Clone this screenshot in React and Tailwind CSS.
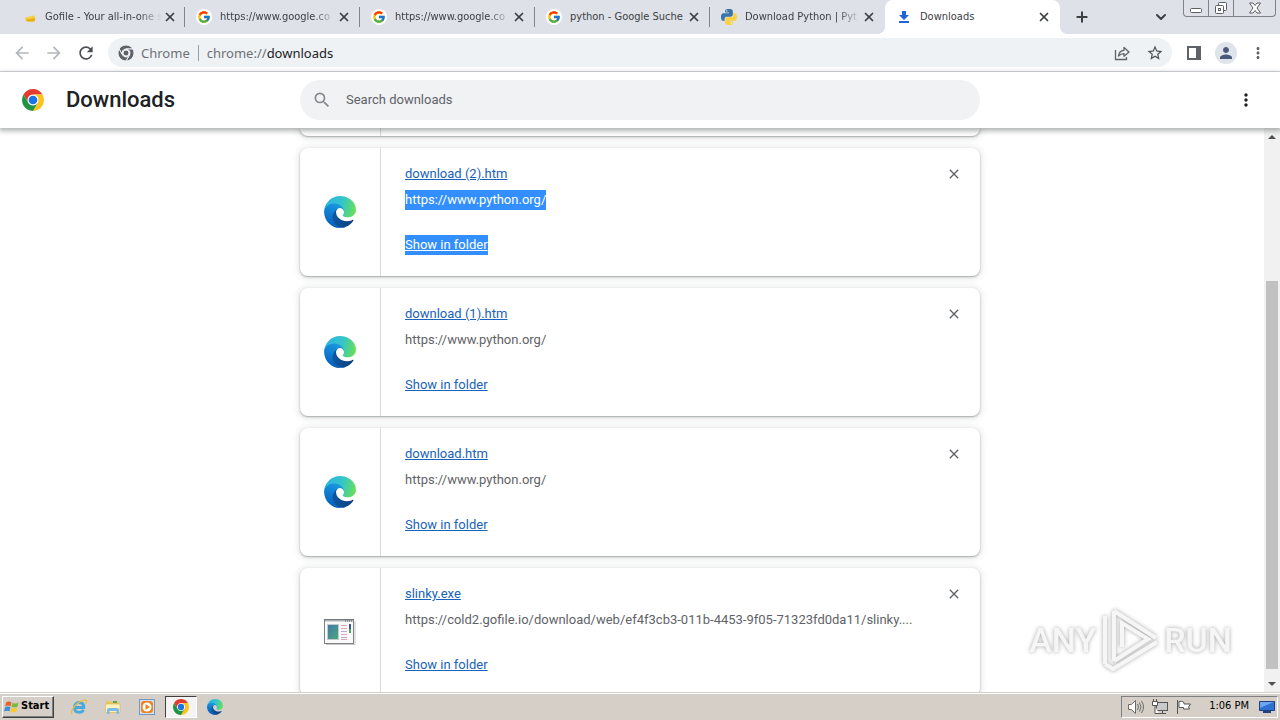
import clsx from 'clsx';
import { Plus, X, ChevronDown } from 'lucide-react';
import { FcGoogle } from 'react-icons/fc';
import {
  MdArrowBack,
  MdArrowForward,
  MdClose,
  MdMoreVert,
  MdPerson,
  MdRefresh,
  MdSearch,
  MdStarBorder,
} from 'react-icons/md';

const TABS = [
  { id: 'gofile', title: 'Gofile - Your all-in-one s', icon: GofileIcon, fade: true },
  { id: 'g1', title: 'https://www.google.co', icon: GoogleIcon, fade: true },
  { id: 'g2', title: 'https://www.google.co', icon: GoogleIcon, fade: true },
  { id: 'g3', title: 'python - Google Suche', icon: GoogleIcon },
  { id: 'py', title: 'Download Python | Pyt', icon: PythonIcon, fade: true },
  { id: 'dl', title: 'Downloads', icon: DownloadIcon, active: true },
];

const DOWNLOADS = [
  { name: 'download (2).htm', url: 'https://www.python.org/', icon: EdgeIcon, selected: true },
  { name: 'download (1).htm', url: 'https://www.python.org/', icon: EdgeIcon },
  { name: 'download.htm', url: 'https://www.python.org/', icon: EdgeIcon },
  {
    name: 'slinky.exe',
    url: 'https://cold2.gofile.io/download/web/ef4f3cb3-011b-4453-9f05-71323fd0da11/slinky....',
    icon: ExeIcon,
  },
];

/* ---------- icons ---------- */

function ChromeIcon({ className }) {
  return (
    <svg viewBox="0 0 48 48" className={className}>
      <circle cx="24" cy="24" r="12" fill="#fff" />
      <path fill="#e33b2e" d="M24 12h20.78A24 24 0 0 0 3.22 12l10.39 18A12 12 0 0 1 24 12z" />
      <path fill="#fcc31e" d="M34.39 30 24 48a24 24 0 0 0 20.78-36H24a12 12 0 0 1 10.39 18z" />
      <path fill="#229342" d="M13.61 30 3.22 12A24 24 0 0 0 24 48l10.39-18a12 12 0 0 1-20.78 0z" />
      <circle cx="24" cy="24" r="9.5" fill="#1a73e8" />
    </svg>
  );
}

function ChromeMonoIcon({ className }) {
  return (
    <svg viewBox="0 0 48 48" className={className} fill="#5f6368" stroke="#eff2f5" strokeWidth="3">
      <path d="M24 12h20.78A24 24 0 0 0 3.22 12l10.39 18A12 12 0 0 1 24 12z" />
      <path d="M34.39 30 24 48a24 24 0 0 0 20.78-36H24a12 12 0 0 1 10.39 18z" />
      <path d="M13.61 30 3.22 12A24 24 0 0 0 24 48l10.39-18a12 12 0 0 1-20.78 0z" />
      <circle cx="24" cy="24" r="9" />
    </svg>
  );
}

function EdgeIcon({ className }) {
  return (
    <svg viewBox="4 4 257 257" className={className}>
      <defs>
        <linearGradient id="edgeDark" x1="63" y1="178" x2="241" y2="178" gradientUnits="userSpaceOnUse">
          <stop offset="0" stopColor="#0c59a4" />
          <stop offset="1" stopColor="#0d3f80" />
        </linearGradient>
        <linearGradient id="edgeBlue" x1="130" y1="60" x2="60" y2="240" gradientUnits="userSpaceOnUse">
          <stop offset="0" stopColor="#1b9de2" />
          <stop offset="0.5" stopColor="#1180d2" />
          <stop offset="1" stopColor="#0562bd" />
        </linearGradient>
        <linearGradient id="edgeGreen" x1="30" y1="70" x2="250" y2="130" gradientUnits="userSpaceOnUse">
          <stop offset="0" stopColor="#2fb4e0" />
          <stop offset="0.5" stopColor="#35c5c9" />
          <stop offset="1" stopColor="#66df58" />
        </linearGradient>
      </defs>
      <path
        fill="url(#edgeDark)"
        d="M235.68 195.46a93.73 93.73 0 0 1-10.54 4.71 101.87 101.87 0 0 1-35.9 6.46c-47.32 0-88.54-32.55-88.54-74.32A31.48 31.48 0 0 1 117.13 105c-42.8 1.8-53.8 46.4-53.8 72.53 0 73.88 68.09 81.37 82.76 81.37 7.91 0 19.84-2.3 27-4.56l1.31-.44a128.34 128.34 0 0 0 66.6-52.8 4 4 0 0 0-5.32-5.64z"
      />
      <path
        fill="url(#edgeBlue)"
        d="M110.34 246.34A79.2 79.2 0 0 1 87.6 225a80.72 80.72 0 0 1 29.53-120c3.12-1.47 8.45-4.13 15.54-4a32.35 32.35 0 0 1 25.69 13 31.88 31.88 0 0 1 6.36 18.66c0-.21 24.46-79.6-80-79.6-43.9 0-80 41.66-80 78.21a130.15 130.15 0 0 0 12.11 56 128 128 0 0 0 156.38 67.11 75.55 75.55 0 0 1-62.78-8z"
      />
      <path
        fill="url(#edgeGreen)"
        d="M156.94 153.78c-.81 1.05-3.3 2.5-3.3 5.66 0 2.61 1.7 5.12 4.72 7.23 14.38 10 41.49 8.68 41.56 8.68a59.56 59.56 0 0 0 30.27-8.35 61.38 61.38 0 0 0 30.43-52.88c.26-22.41-8-37.31-11.34-43.91C228.09 28.76 182.35 4.92 132.61 4.92a128 128 0 0 0-128 126.2c.48-36.54 36.8-66.05 80-66.05 3.5 0 23.46.34 42 10.07 16.34 8.58 24.9 18.94 30.85 29.21 6.18 10.67 7.28 24.15 7.28 29.52s-2.74 13.33-7.8 19.91z"
      />
    </svg>
  );
}

function ExeIcon({ className }) {
  return (
    <svg viewBox="0 0 32 32" className={className}>
      <defs>
        <linearGradient id="exeFill" x1="0" y1="0" x2="1" y2="1">
          <stop offset="0" stopColor="#3f78ae" />
          <stop offset="1" stopColor="#4fa978" />
        </linearGradient>
      </defs>
      <path d="M2 28.500h29V5" fill="none" stroke="#c8c8c8" />
      <rect x="0.500" y="3.500" width="29" height="24" fill="#fafafa" stroke="#7d8186" />
      <path d="M0 4h30" stroke="#6b6f74" />
      <path d="M1 5.500h28" stroke="#d5d8da" />
      <path d="M21 5h7" stroke="#55595e" strokeDasharray="1 1" />
      <rect x="3.500" y="8.500" width="11" height="15" fill="url(#exeFill)" stroke="#c3cbd0" />
      <path d="M17 9.500h6M17 12.500h6M17 18.500h6M17 23.500h6" stroke="#e2a5b4" />
      <path d="M17 15.500h6M17 21.500h6" stroke="#b9a9d0" />
      <rect x="25" y="8" width="2" height="5" fill="#37598f" />
      <rect x="25" y="13" width="2" height="4" fill="#4fa560" />
    </svg>
  );
}

function GofileIcon({ className }) {
  return (
    <svg viewBox="0 0 16 16" className={className}>
      <path fill="#f4cf4c" d="M4 8.500 13 6.500a1 1 0 0 1 1 1V11a1.500 1.500 0 0 1-1.500 1.500H7A2.500 2.500 0 0 1 4.500 11z" />
      <path fill="#e9b012" d="M5 10.500 14 9v2a1.500 1.500 0 0 1-1.500 1.500H7a2 2 0 0 1-2-2z" />
    </svg>
  );
}

function GoogleIcon({ className }) {
  return (
    <span className={clsx(className, 'flex items-center justify-center rounded-full bg-white')}>
      <FcGoogle size={14} />
    </span>
  );
}

function PythonIcon({ className }) {
  return (
    <svg viewBox="0 0 24 24" className={className}>
      <path
        fill="#3a74a8"
        d="M11.900 0C5.800 0 6.200 2.600 6.200 2.600v2.800H12v.8H3.900S0 5.800 0 11.900c0 6.100 3.400 5.900 3.400 5.900h2v-2.900s-.1-3.400 3.300-3.400h5.800s3.200.1 3.200-3.100V3.200S18.200 0 11.900 0z"
      />
      <path
        fill="#fcd03f"
        d="M12.100 24c6.100 0 5.700-2.600 5.700-2.600v-2.800H12v-.8h8.100S24 18.200 24 12.100c0-6.100-3.400-5.900-3.400-5.900h-2v2.900s.1 3.400-3.300 3.400H9.500s-3.200-.1-3.200 3.100v5.200S5.800 24 12.100 24z"
      />
      <circle cx="8.700" cy="2.900" r="1" fill="#fff" />
      <circle cx="15.300" cy="21.100" r="1" fill="#fff" />
    </svg>
  );
}

function DownloadIcon({ className }) {
  return (
    <svg viewBox="0 0 16 16" className={className} fill="#1f66d8">
      <path d="M6 2h4v4h3L8 11 3 6h3z" />
      <path d="M3 12h10v2H3z" />
    </svg>
  );
}

function ShareIcon({ className }) {
  return (
    <svg viewBox="0 0 16 16" className={className} fill="none" stroke="#5f6368" strokeWidth="1.300">
      <path d="M1.500 5v9.500h11V12" />
      <path strokeLinejoin="round" d="M4.500 11C4.800 7.500 7 5.500 10 5.300V2.500L15 7l-5 4.300V8.600C7.500 8.600 6 9.200 4.500 11z" />
    </svg>
  );
}

/* ---------- browser chrome ---------- */

function Tab({ title, icon: Icon, active, fade, last }) {
  return (
    <div
      className={clsx(
        'relative flex h-full w-[175px] shrink-0 items-center pr-2 pl-[11px]',
        active && 'rounded-t-lg bg-white'
      )}
    >
      {active && (
        <>
          <span className="absolute bottom-0 -left-2 size-2 bg-[radial-gradient(circle_at_0_0,#dee1e8_8px,#fff_8px)]" />
          <span className="absolute -right-2 bottom-0 size-2 bg-[radial-gradient(circle_at_100%_0,#dee1e8_8px,#fff_8px)]" />
        </>
      )}
      <Icon className="size-4 shrink-0" />
      <span
        className={clsx(
          'ml-2 flex-1 text-[11px] leading-4 whitespace-nowrap text-[#3c4043]',
          fade && '[mask-image:linear-gradient(to_right,#000_80%,transparent)]'
        )}
      >
        {title}
      </span>
      <button aria-label={`Close ${title}`} className="flex size-4 shrink-0 items-center justify-center text-[#3c4043]">
        <X size={14} strokeWidth={3} />
      </button>
      {!active && !last && <span className="absolute right-0 h-5 w-px bg-[#80848b]" />}
    </div>
  );
}

function TabStrip() {
  return (
    <div className="flex h-[34px] shrink-0 bg-[#dee1e8] pl-[10px] font-[DejaVu_Sans_Condensed,sans-serif]">
      {TABS.map(({ id, ...tab }, i) => (
        <Tab key={id} {...tab} last={i === TABS.length - 2} />
      ))}
      <button aria-label="New tab" className="ml-3 flex w-5 items-center justify-center text-[#3c4043]">
        <Plus size={16} strokeWidth={3} />
      </button>
      <div className="flex-1" />
      <button aria-label="Search tabs" className="mr-3 flex w-5 items-center justify-center text-[#3c4043]">
        <ChevronDown size={16} strokeWidth={3} />
      </button>
      <div className="mr-1 flex h-[17px] w-[93px] rounded-b-[4px] border border-t-0 border-[#7f838a] text-[#5b5f66]">
        <button aria-label="Minimize" className="flex w-[25px] items-center justify-center border-r border-[#7f838a]">
          <svg viewBox="0 0 12 12" className="size-3" fill="#fff" stroke="currentColor">
            <rect x="0.500" y="6.500" width="11" height="4" rx="1" />
          </svg>
        </button>
        <button aria-label="Restore" className="flex w-[25px] items-center justify-center border-r border-[#7f838a]">
          <svg viewBox="0 0 14 14" className="size-[14px]" fill="#fff" stroke="currentColor">
            <rect x="4.500" y="1.500" width="8" height="8" rx="1" />
            <rect x="1.500" y="4.500" width="8" height="8" rx="1" />
            <rect x="4.500" y="7.500" width="2" height="2" />
          </svg>
        </button>
        <button aria-label="Close window" className="flex flex-1 items-center justify-center">
          <svg viewBox="0 0 12 12" className="size-3" fill="#fff" stroke="currentColor">
            <path d="M.500 1h3.500l2 2.500L8 1h3.500L8 6l3.500 5H8L6 8.500 4 11H.500L4 6z" />
          </svg>
        </button>
      </div>
    </div>
  );
}

function Toolbar() {
  return (
    <div className="flex h-[38px] shrink-0 items-center border-b border-[#d5d8dc] bg-white pr-[13px] pl-3 font-[Noto_Sans,sans-serif]">
      <button aria-label="Back" className="flex w-5 justify-center text-[#b4b7bb]">
        <MdArrowBack size={20} />
      </button>
      <button aria-label="Forward" className="ml-3 flex w-5 justify-center text-[#b4b7bb]">
        <MdArrowForward size={20} />
      </button>
      <button aria-label="Reload" className="ml-3 flex w-5 justify-center text-[#4b4f54]">
        <MdRefresh size={20} />
      </button>
      <div className="ml-3 flex h-[29px] flex-1 items-center rounded-full bg-[#eff2f5] pr-2 pl-[10px] text-[13px] leading-5 text-[#6d7176]">
        <ChromeMonoIcon className="size-4" />
        <span className="ml-[7px]">Chrome</span>
        <span className="mx-2 h-4 w-px bg-[#9a9da1]" />
        <span>chrome://</span>
        <input
          aria-label="Address"
          defaultValue="downloads"
          className="min-w-0 flex-1 bg-transparent text-[#202124] outline-none"
        />
        <button aria-label="Share this page" className="mr-4">
          <ShareIcon className="size-4" />
        </button>
        <button aria-label="Bookmark this tab" className="text-[#4b4f54]">
          <MdStarBorder size={18} />
        </button>
      </div>
      <button aria-label="Side panel" className="ml-[14px]">
        <svg viewBox="0 0 16 16" className="size-4">
          <path fill="#5f6368" d="M1 1h14v14H1zM3 3v10h7V3z" fillRule="evenodd" />
        </svg>
      </button>
      <button
        aria-label="Profile"
        className="ml-[13px] flex size-[22px] items-center justify-center rounded-full bg-[#dfe3ea] text-[#4b5a7b]"
      >
        <MdPerson size={18} />
      </button>
      <button aria-label="Menu" className="ml-3 text-[#5f6368]">
        <MdMoreVert size={18} />
      </button>
    </div>
  );
}

/* ---------- downloads page ---------- */

function PageHeader() {
  return (
    <header className="relative z-10 grid h-14 shrink-0 grid-cols-[1fr_680px_1fr] items-center bg-white shadow-[0_2px_5px_1px_rgba(60,64,67,0.4)]">
      <div className="flex items-center pl-[22px]">
        <ChromeIcon className="size-[22px]" />
        <h1 className="ml-[22px] text-[22px] leading-7 font-medium text-[#202124]">Downloads</h1>
      </div>
      <label className="flex h-10 items-center rounded-full bg-[#f0f2f4] pl-3 text-[#5f6368]">
        <MdSearch size={20} className="text-[#85888c]" />
        <input
          type="search"
          aria-label="Search downloads"
          placeholder="Search downloads"
          className="ml-[14px] flex-1 bg-transparent text-[13px] leading-5 outline-none placeholder:text-[#5f6368]"
        />
      </label>
      <div className="flex justify-end pr-6">
        <button aria-label="More actions" className="text-[#202124]">
          <MdMoreVert size={20} />
        </button>
      </div>
    </header>
  );
}

function DownloadCard({ name, url, icon: Icon, selected }) {
  return (
    <li className="flex h-32 shrink-0 rounded-lg bg-white shadow-[0_1px_2px_rgba(60,64,67,0.4),0_1px_6px_2px_rgba(60,64,67,0.12)]">
      <div className="flex w-20 items-center justify-center">
        <Icon className="size-8" />
      </div>
      <div className="flex flex-1 flex-col items-start border-l border-[#d8dadd] pt-4 pl-6 text-[13px] leading-5">
        <a href="#file" className="text-[#1a63b8] underline">
          {name}
        </a>
        <span className={clsx('mt-[6px] whitespace-nowrap', selected ? 'bg-[#338fff] text-white' : 'text-[#5f6368]')}>
          {url}
        </span>
        <a
          href="#folder"
          className={clsx('mt-[25px] underline', selected ? 'bg-[#338fff] text-white' : 'text-[#1a63b8]')}
        >
          Show in folder
        </a>
      </div>
      <button aria-label={`Remove ${name}`} className="mt-[18px] mr-[18px] size-4 text-[#5f6368]">
        <MdClose size={16} />
      </button>
    </li>
  );
}

function Scrollbar() {
  return (
    <div className="flex w-4 flex-col items-center bg-[#f1f1f1]">
      <button aria-label="Scroll up" className="flex h-[17px] w-4 items-center justify-center">
        <svg viewBox="0 0 8 4" className="h-1 w-2">
          <path fill="#505050" d="M0 4 4 0l4 4z" />
        </svg>
      </button>
      <div className="flex w-full flex-1 flex-col justify-end px-[2px] pb-[6px]">
        <div className="h-[74%] bg-[#c1c1c1]" />
      </div>
      <button aria-label="Scroll down" className="flex h-[17px] w-4 items-center justify-center">
        <svg viewBox="0 0 8 4" className="h-1 w-2">
          <path fill="#505050" d="M0 0l4 4 4-4z" />
        </svg>
      </button>
    </div>
  );
}

function Watermark() {
  return (
    <div className="absolute right-12 bottom-4 flex items-center gap-1 font-[Roboto,sans-serif] text-[34px] leading-[72px] font-medium text-[#f6f6f6] drop-shadow-[0_0_2px_rgba(0,0,0,0.35)]">
      <span>ANY</span>
      <svg viewBox="0 0 60 64" className="h-16 w-[60px]" fill="none" stroke="currentColor" strokeWidth="4">
        <path strokeLinejoin="round" d="M14 3v50M14 3l42 27" />
        <path strokeLinejoin="round" d="M5 8v48M5 56l8 5 44-27" />
        <path d="M14 53l34-22L22 15v24" />
      </svg>
      <span>RUN</span>
    </div>
  );
}

/* ---------- taskbar ---------- */

function Taskbar() {
  return (
    <footer className="flex h-7 shrink-0 items-center border-t border-[#d5d1c8] bg-[#d6cfc8] pr-[2px] pl-[2px] font-[DejaVu_Sans_Condensed,sans-serif] text-[11px] text-black shadow-[inset_0_1px_0_#fff]">
      <button className="flex h-[22px] w-[52px] items-center gap-px border border-t-white border-r-[#404040] border-b-[#404040] border-l-white pl-px font-bold shadow-[inset_-1px_-1px_0_#808080]">
        <svg viewBox="0 0 16 16" className="size-4">
          <path fill="#e5622b" d="M2 3.500c2-1.300 3.800-1.200 5.500-.2L6.600 7.300C5 6.400 3.200 6.300 1.200 7.500z" />
          <path fill="#7cb83f" d="M8.400 3.700c1.800 1 3.700 1 6.100-.2l-1 4.200c-2.100 1-4.100 1.100-6 .1z" />
          <path fill="#3f8fd6" d="M1 8.500c2-1.200 3.800-1.100 5.400-.2l-.9 4C4 11.400 2.200 11.400.2 12.500z" />
          <path fill="#f8c92f" d="M7.300 8.800c1.800 1 3.700 1 6.100-.2l-1 4.200c-2.100 1-4.200 1-6 0z" />
        </svg>
        Start
      </button>
      <button aria-label="Internet Explorer" className="ml-4">
        <svg viewBox="0 0 18 18" className="size-[18px]" fill="none">
          <path
            stroke="#48a9e0"
            strokeWidth="2.800"
            d="M4.500 9.500h9.300c0-3.200-1.900-5-4.700-5-2.900 0-4.700 2.100-4.700 5s1.900 4.800 4.800 4.800c2 0 3.500-.8 4.300-2.300"
          />
          <path stroke="#efbd37" strokeWidth="1.300" d="M2.200 15.800c-2-2 1.200-7.300 5.800-10.700s8.500-4 8.700-2c0 .9-.4 1.900-1 2.900" />
        </svg>
      </button>
      <button aria-label="File Explorer" className="ml-4">
        <svg viewBox="0 0 18 18" className="size-[18px]">
          <path fill="#e9c766" d="M2 3h5l1 1h7v11H2z" />
          <path fill="#fdf2c0" stroke="#d9b44e" strokeWidth="0.600" d="M1.500 6h14.500v8.500H1.500z" />
          <path fill="#62a64b" d="M9 3h4v2H9z" />
          <path fill="#7cbbe6" d="M3 16v-4q0-2 2-2h8q2 0 2 2v4h-2.500v-3h-7v3z" />
        </svg>
      </button>
      <button aria-label="Media Player" className="ml-4">
        <svg viewBox="0 0 18 18" className="size-[18px]">
          <rect x="1.500" y="1.500" width="15" height="15" fill="#cfe1f3" stroke="#7397c4" />
          <rect x="3" y="3" width="12" height="12" rx="3" fill="#ee8420" />
          <circle cx="9" cy="9" r="4.500" fill="#fff" />
          <path fill="#ee8420" d="M7.500 6l4.500 3-4.500 3z" />
        </svg>
      </button>
      <button
        aria-label="Google Chrome"
        className="ml-[9px] flex h-[22px] w-8 items-center justify-center border border-t-[#404040] border-r-white border-b-white border-l-[#404040] bg-[#f6f4f2]"
      >
        <ChromeIcon className="size-4" />
      </button>
      <button aria-label="Microsoft Edge" className="ml-[10px]">
        <EdgeIcon className="size-4" />
      </button>
      <div className="flex-1" />
      <div className="flex h-[22px] items-center border border-t-[#808080] border-r-white border-b-white border-l-[#808080] pr-[2px] pl-[5px]">
        <svg viewBox="0 0 18 16" className="h-4 w-[18px]" fill="none" stroke="#6b6b6b">
          <path fill="#fff" d="M1.500 5.500h3l4-4v13l-4-4h-3z" />
          <path d="M10.500 5q2 3 0 6M12.500 3.500q3 4.500 0 9M14.500 2q4 6 0 12" />
        </svg>
        <svg viewBox="0 0 18 16" className="ml-[6px] h-4 w-[18px]" fill="#fff" stroke="#555">
          <rect x="5.500" y="3.500" width="11" height="8" fill="#c9c9c9" />
          <path d="M8 14.500h7M11.500 12v2" />
          <path d="M1.500 2.500h5v4h-5zM2.500 0v2M5.500 0v2M4 7v7.500h4" />
        </svg>
        <svg viewBox="0 0 18 16" className="ml-[6px] h-4 w-[18px]" fill="#fff" stroke="#555">
          <path d="M2.500 1v14M4 2.500q3-1 5 1v1.500h6.500l-2 3 1 2H8.500V8.500H4z" />
        </svg>
        <time className="ml-4">1:06 PM</time>
        <svg viewBox="0 0 16 14" className="ml-[10px] h-[14px] w-4">
          <path fill="#2f6fd0" stroke="#1c3f86" d="M.500 1.500h15v9H.500z" />
          <path fill="#6aa5ee" d="M1 2h14L1 8z" />
          <path fill="#24427c" d="M4 11h8v2H4z" />
        </svg>
      </div>
    </footer>
  );
}

export default function App() {
  return (
    <div className="flex h-screen flex-col overflow-hidden bg-white font-[Roboto,sans-serif]">
      <TabStrip />
      <Toolbar />
      <PageHeader />
      <main className="relative flex min-h-0 flex-1 overflow-hidden">
        {/* the scrollbar sits outside the centred column, so pad the other side to match */}
        <div className="flex flex-1 justify-center overflow-hidden pl-4">
          <ul className="flex w-[680px] flex-col gap-3">
            <li className="flex h-2 shrink-0 rounded-b-lg bg-white pl-20 shadow-[0_1px_2px_rgba(60,64,67,0.4),0_1px_6px_2px_rgba(60,64,67,0.12)]">
              <span className="border-l border-[#d8dadd]" />
            </li>
            {DOWNLOADS.map((item) => (
              <DownloadCard key={item.name} {...item} />
            ))}
          </ul>
        </div>
        <Scrollbar />
        <Watermark />
      </main>
      <Taskbar />
    </div>
  );
}
